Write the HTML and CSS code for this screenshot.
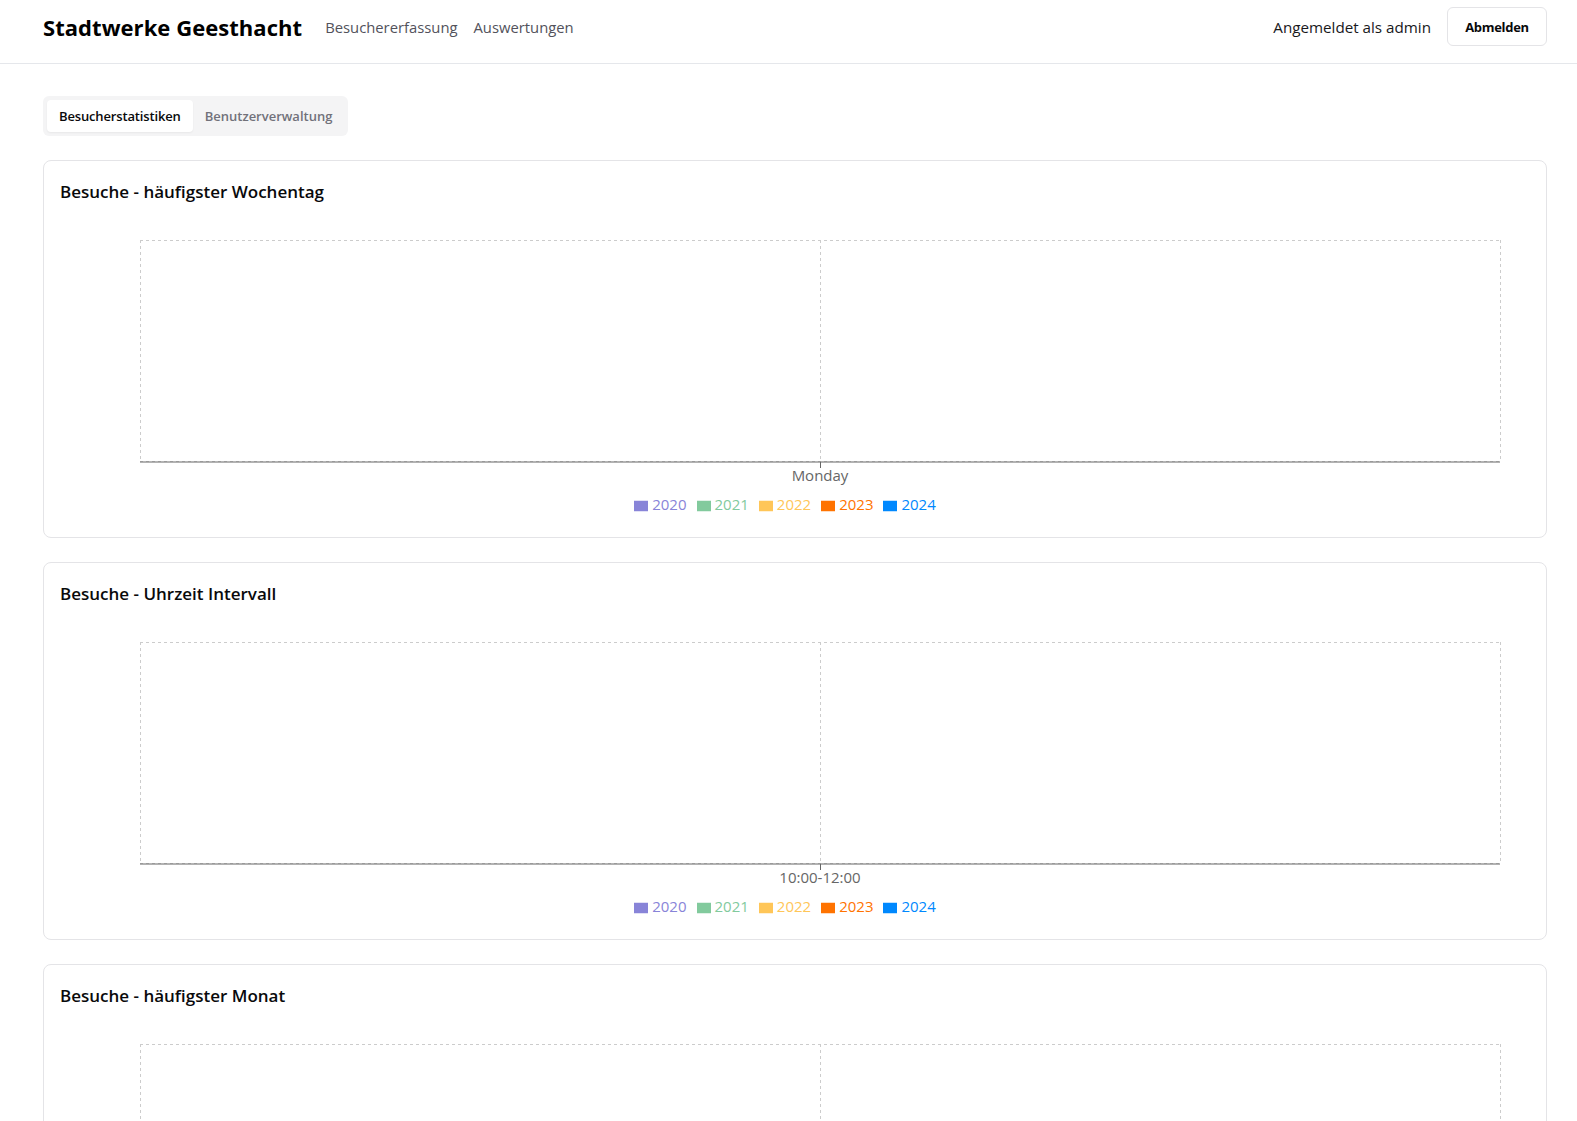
FILE: index.html
```html
<!DOCTYPE html>
<html lang="de">
<head>
<meta charset="utf-8">
<title>Stadtwerke Geesthacht</title>
<link rel="stylesheet" href="styles.css">
</head>
<body>
<header class="header">
  <div class="header-left">
    <h1 class="brand">Stadtwerke Geesthacht</h1>
    <nav class="nav">
      <a class="nav-link" href="#">Besuchererfassung</a>
      <a class="nav-link" href="#">Auswertungen</a>
    </nav>
  </div>
  <div class="header-right">
    <span class="user">Angemeldet als admin</span>
    <button class="btn">Abmelden</button>
  </div>
</header>

<main class="main">
  <div class="tabs">
    <button class="tab tab-active">Besucherstatistiken</button>
    <button class="tab">Benutzerverwaltung</button>
  </div>

  <section class="card">
    <h2 class="card-title">Besuche - häufigster Wochentag</h2>
    <svg class="chart" width="1470" height="258" viewBox="0 0 1470 258">
      <g class="grid">
        <line x1="80" y1="5.5" x2="1440" y2="5.5"/>
        <line x1="80" y1="226.5" x2="1440" y2="226.5"/>
        <line x1="80.5" y1="5" x2="80.5" y2="227"/>
        <line x1="760.5" y1="5" x2="760.5" y2="227"/>
        <line x1="1440.5" y1="5" x2="1440.5" y2="227"/>
      </g>
      <line class="axis" x1="80" y1="227" x2="1440" y2="227"/>
      <line class="tick" x1="760.5" y1="227" x2="760.5" y2="233"/>
      <text class="tick-label" x="760" y="246" text-anchor="middle">Monday</text>
    </svg>
    <ul class="legend">
      <li class="legend-item c2020"><svg class="legend-icon" width="14" height="14" viewBox="0 0 32 32"><path d="M0,4h32v24h-32z"/></svg>2020</li>
      <li class="legend-item c2021"><svg class="legend-icon" width="14" height="14" viewBox="0 0 32 32"><path d="M0,4h32v24h-32z"/></svg>2021</li>
      <li class="legend-item c2022"><svg class="legend-icon" width="14" height="14" viewBox="0 0 32 32"><path d="M0,4h32v24h-32z"/></svg>2022</li>
      <li class="legend-item c2023"><svg class="legend-icon" width="14" height="14" viewBox="0 0 32 32"><path d="M0,4h32v24h-32z"/></svg>2023</li>
      <li class="legend-item c2024"><svg class="legend-icon" width="14" height="14" viewBox="0 0 32 32"><path d="M0,4h32v24h-32z"/></svg>2024</li>
    </ul>
  </section>

  <section class="card">
    <h2 class="card-title">Besuche - Uhrzeit Intervall</h2>
    <svg class="chart" width="1470" height="258" viewBox="0 0 1470 258">
      <g class="grid">
        <line x1="80" y1="5.5" x2="1440" y2="5.5"/>
        <line x1="80" y1="226.5" x2="1440" y2="226.5"/>
        <line x1="80.5" y1="5" x2="80.5" y2="227"/>
        <line x1="760.5" y1="5" x2="760.5" y2="227"/>
        <line x1="1440.5" y1="5" x2="1440.5" y2="227"/>
      </g>
      <line class="axis" x1="80" y1="227" x2="1440" y2="227"/>
      <line class="tick" x1="760.5" y1="227" x2="760.5" y2="233"/>
      <text class="tick-label" x="760" y="246" text-anchor="middle">10:00-12:00</text>
    </svg>
    <ul class="legend">
      <li class="legend-item c2020"><svg class="legend-icon" width="14" height="14" viewBox="0 0 32 32"><path d="M0,4h32v24h-32z"/></svg>2020</li>
      <li class="legend-item c2021"><svg class="legend-icon" width="14" height="14" viewBox="0 0 32 32"><path d="M0,4h32v24h-32z"/></svg>2021</li>
      <li class="legend-item c2022"><svg class="legend-icon" width="14" height="14" viewBox="0 0 32 32"><path d="M0,4h32v24h-32z"/></svg>2022</li>
      <li class="legend-item c2023"><svg class="legend-icon" width="14" height="14" viewBox="0 0 32 32"><path d="M0,4h32v24h-32z"/></svg>2023</li>
      <li class="legend-item c2024"><svg class="legend-icon" width="14" height="14" viewBox="0 0 32 32"><path d="M0,4h32v24h-32z"/></svg>2024</li>
    </ul>
  </section>

  <section class="card">
    <h2 class="card-title">Besuche - häufigster Monat</h2>
    <svg class="chart" width="1470" height="258" viewBox="0 0 1470 258">
      <g class="grid">
        <line x1="80" y1="5.5" x2="1440" y2="5.5"/>
        <line x1="80" y1="226.5" x2="1440" y2="226.5"/>
        <line x1="80.5" y1="5" x2="80.5" y2="227"/>
        <line x1="760.5" y1="5" x2="760.5" y2="227"/>
        <line x1="1440.5" y1="5" x2="1440.5" y2="227"/>
      </g>
      <line class="axis" x1="80" y1="227" x2="1440" y2="227"/>
      <line class="tick" x1="760.5" y1="227" x2="760.5" y2="233"/>
      <text class="tick-label" x="760" y="246" text-anchor="middle">January</text>
    </svg>
    <ul class="legend">
      <li class="legend-item c2020"><svg class="legend-icon" width="14" height="14" viewBox="0 0 32 32"><path d="M0,4h32v24h-32z"/></svg>2020</li>
      <li class="legend-item c2021"><svg class="legend-icon" width="14" height="14" viewBox="0 0 32 32"><path d="M0,4h32v24h-32z"/></svg>2021</li>
      <li class="legend-item c2022"><svg class="legend-icon" width="14" height="14" viewBox="0 0 32 32"><path d="M0,4h32v24h-32z"/></svg>2022</li>
      <li class="legend-item c2023"><svg class="legend-icon" width="14" height="14" viewBox="0 0 32 32"><path d="M0,4h32v24h-32z"/></svg>2023</li>
      <li class="legend-item c2024"><svg class="legend-icon" width="14" height="14" viewBox="0 0 32 32"><path d="M0,4h32v24h-32z"/></svg>2024</li>
    </ul>
  </section>
</main>
</body>
</html>
```

FILE: styles.css
```css
html {
  scrollbar-width: none;
}
html::-webkit-scrollbar {
  display: none;
}
* {
  box-sizing: border-box;
}
body {
  margin: 0;
  background: #ffffff;
  color: #09090b;
  font-family: "Open Sans", "Noto Sans", sans-serif;
}

/* Header */
.header {
  height: 64px;
  padding: 7px 30px 0 43px;
  border-bottom: 1px solid #e5e7eb;
  display: flex;
  justify-content: space-between;
  align-items: flex-start;
}
.header-left,
.header-right {
  height: 39px;
  display: flex;
  align-items: center;
}
.brand {
  margin: 0;
  padding-top: 1px;
  font-size: 22px;
  line-height: 32px;
  font-weight: 700;
  letter-spacing: 0.05px;
  color: #000;
}
.nav {
  display: flex;
  gap: 16px;
  margin-left: 23px;
}
.nav-link {
  font-size: 14.8px;
  line-height: 24px;
  color: #52525b;
  text-decoration: none;
}
.user {
  font-size: 15.2px;
  line-height: 24px;
  color: #18181b;
  margin-right: 16px;
}
.btn {
  height: 39px;
  width: 100px;
  padding: 1px 0 0;
  border: 1px solid #e4e4e7;
  border-radius: 6px;
  background: #fff;
  font-family: inherit;
  font-size: 13px;
  line-height: 20px;
  font-weight: 700;
  letter-spacing: -0.3px;
  color: #09090b;
}

/* Main */
.main {
  padding: 32px 30px 0 43px;
}
.tabs {
  display: inline-flex;
  height: 40px;
  padding: 4px;
  background: #f4f4f5;
  border-radius: 6px;
  margin-bottom: 24px;
}
.tab {
  height: 32px;
  padding: 0 12px;
  border: 0;
  border-radius: 4px;
  background: transparent;
  font-family: inherit;
  font-size: 13px;
  line-height: 20px;
  font-weight: 600;
  color: #71717a;
}
.tab-active {
  background: #fff;
  color: #09090b;
  letter-spacing: -0.15px;
  box-shadow: 0 1px 2px rgba(0, 0, 0, 0.05);
}

.card {
  border: 1px solid #e4e4e7;
  border-radius: 8px;
  padding: 17px 16px 22px;
  margin-bottom: 24px;
  background: #fff;
}
.card-title {
  margin: 0;
  font-size: 17px;
  line-height: 28px;
  font-weight: 600;
  color: #09090b;
}
.chart {
  display: block;
  margin-top: 29px;
}
.grid line {
  stroke: #ccc;
  stroke-dasharray: 3 3;
  stroke-width: 1;
}
.axis,
.tick {
  stroke: #666;
  stroke-width: 1;
}
.tick-label {
  font-family: "Open Sans", sans-serif;
  font-size: 15px;
  fill: #666;
}

.legend {
  list-style: none;
  margin: 0 30px 0 20px;
  padding: 0;
  height: 22px;
  display: flex;
  justify-content: center;
  font-size: 15px;
  line-height: 22px;
}
.legend-item {
  display: flex;
  align-items: center;
  margin-right: 10px;
}
.legend-icon {
  display: block;
  margin: 4px 4px 0 0;
}
.c2020 { color: #8884d8; }
.c2020 path { fill: #8884d8; }
.c2021 { color: #82ca9d; }
.c2021 path { fill: #82ca9d; }
.c2022 { color: #ffc658; }
.c2022 path { fill: #ffc658; }
.c2023 { color: #ff7300; }
.c2023 path { fill: #ff7300; }
.c2024 { color: #0088fe; }
.c2024 path { fill: #0088fe; }
```
